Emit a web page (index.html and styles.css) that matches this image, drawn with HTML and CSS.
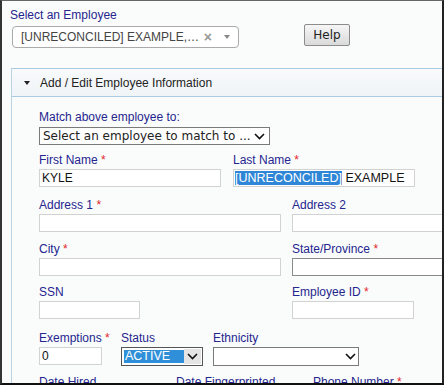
FILE: index.html
```html
<!DOCTYPE html>
<html>
<head>
    <meta name="viewport" content="width=device-width, initial-scale=1.0">
    <link rel="stylesheet" href="styles.css">
</head>
<body>
<div class="frame">

    <div class="topo">
        <div class="rotulo">Select an Employee</div>
        <div class="linha-topo">
            <div class="s2">
                <span class="s2-texto">[UNRECONCILED] EXAMPLE,…</span>
                <span class="s2-limpar">×</span>
                <span class="s2-seta"></span>
            </div>
            <button class="ajuda">Help</button>
        </div>
    </div>

    <div class="painel">
        <div class="painel-cab"><span class="tri"></span>Add / Edit Employee Information</div>
        <div class="painel-corpo">

            <div class="linha l-match">
                <div class="campo">
                    <div class="rotulo">Match above employee to:</div>
                    <div class="sel sel-match">
                        <span class="sel-texto">Select an employee to match to ...</span>
                        <svg class="chev" width="11" height="7" viewBox="0 0 11 7"><polyline points="1,1 5.5,5.5 10,1" fill="none" stroke="#111" stroke-width="1.6"/></svg>
                    </div>
                </div>
            </div>

            <div class="linha l-nome">
                <div class="campo c194">
                    <div class="rotulo">First Name <span class="req">*</span></div>
                    <div class="inp w182">KYLE</div>
                </div>
                <div class="campo">
                    <div class="rotulo">Last Name <span class="req">*</span></div>
                    <div class="inp w182 sobrenome"><span class="marcado">[UNRECONCILED]</span> EXAMPLE</div>
                </div>
            </div>

            <div class="linha l-end">
                <div class="campo c253">
                    <div class="rotulo">Address 1 <span class="req">*</span></div>
                    <div class="inp w242"></div>
                </div>
                <div class="campo">
                    <div class="rotulo">Address 2</div>
                    <div class="inp w200"></div>
                </div>
            </div>

            <div class="linha l-cidade">
                <div class="campo c253">
                    <div class="rotulo">City <span class="req">*</span></div>
                    <div class="inp w242"></div>
                </div>
                <div class="campo">
                    <div class="rotulo">State/Province <span class="req">*</span></div>
                    <div class="inp w200 escuro"></div>
                </div>
            </div>

            <div class="linha l-ssn">
                <div class="campo c253">
                    <div class="rotulo">SSN</div>
                    <div class="inp w101"></div>
                </div>
                <div class="campo">
                    <div class="rotulo">Employee ID <span class="req">*</span></div>
                    <div class="inp w122"></div>
                </div>
            </div>

            <div class="linha l-isen">
                <div class="campo c82">
                    <div class="rotulo">Exemptions <span class="req">*</span></div>
                    <div class="inp w63">0</div>
                </div>
                <div class="campo c92">
                    <div class="rotulo">Status</div>
                    <div class="sel sel-status">
                        <span class="status-marcado">ACTIVE</span>
                        <span class="status-seta">
                            <svg class="chev" width="11" height="7" viewBox="0 0 11 7"><polyline points="1,1 5.5,5.5 10,1" fill="none" stroke="#111" stroke-width="1.6"/></svg>
                        </span>
                    </div>
                </div>
                <div class="campo">
                    <div class="rotulo">Ethnicity</div>
                    <div class="sel sel-etnia">
                        <span class="sel-texto"></span>
                        <svg class="chev" width="11" height="7" viewBox="0 0 11 7"><polyline points="1,1 5.5,5.5 10,1" fill="none" stroke="#111" stroke-width="1.6"/></svg>
                    </div>
                </div>
            </div>

            <div class="linha l-datas">
                <div class="campo c137">
                    <div class="rotulo">Date Hired</div>
                </div>
                <div class="campo c137">
                    <div class="rotulo">Date Fingerprinted</div>
                </div>
                <div class="campo">
                    <div class="rotulo">Phone Number <span class="req">*</span></div>
                </div>
            </div>

        </div>
    </div>

</div>
</body>
</html>
```

FILE: styles.css
```css
        body {
            margin: 0;
            font-family: "Liberation Sans", Arial, sans-serif;
            font-size: 12px;
            background-color: #ffffff;
        }

        .frame {
            width: 444px;
            height: 385px;
            box-sizing: border-box;
            overflow: hidden;
            background-color: #fafcfb;
            border-top: 1px solid #666;
            border-left: 2px solid #333;
            border-right: 2px solid #222;
            border-bottom: 2px solid #111;
        }

        .rotulo {
            color: #25258f;
            line-height: 15px;
            white-space: nowrap;
        }

        .req {
            color: #e3262c;
        }

        /* topo: seletor de funcionario + ajuda */
        .topo {
            padding: 7px 0 0 8px;
        }

        .linha-topo {
            display: flex;
            align-items: flex-start;
            margin-top: 1px;
        }

        .s2 {
            display: flex;
            align-items: center;
            width: 227px;
            height: 22px;
            box-sizing: border-box;
            margin: 2px 0 0 2px;
            padding: 0 0 0 8px;
            border: 1px solid #aaa;
            border-radius: 4px;
            background-color: #fff;
        }

        .s2-texto {
            color: #444;
            flex: 1;
            white-space: nowrap;
        }

        .s2-limpar {
            color: #999;
            font-weight: bold;
            font-size: 14px;
            margin-right: 12px;
        }

        .s2-seta {
            width: 0;
            height: 0;
            border-left: 3px solid transparent;
            border-right: 3px solid transparent;
            border-top: 4px solid #888;
            margin-right: 8px;
        }

        .ajuda {
            margin-left: 65px;
            width: 46px;
            height: 22px;
            padding: 0;
            font-family: "DejaVu Sans", Verdana, sans-serif;
            font-size: 12px;
            color: #222;
            border: 1px solid #8c8c8c;
            border-radius: 2px;
            background: linear-gradient(#f6f6f6, #dadada);
        }

        /* painel */
        .painel {
            margin: 20px 0 0 9px;
            width: 470px;
            border-top: 1px solid #a9cbe4;
            border-left: 1px solid #b9d2e4;
        }

        .painel-cab {
            height: 27px;
            display: flex;
            align-items: center;
            color: #222;
            border-bottom: 1px solid #a9cbe4;
            background: linear-gradient(#f8fafb, #eff4f7);
        }

        .tri {
            width: 0;
            height: 0;
            border-left: 3px solid transparent;
            border-right: 3px solid transparent;
            border-top: 4px solid #222;
            margin: 0 10px 0 12px;
        }

        .painel-corpo {
            padding: 13px 0 20px 27px;
        }

        .linha {
            display: flex;
        }

        .campo {
            flex-shrink: 0;
        }

        .l-nome { margin-top: 8px; }
        .l-end { margin-top: 11px; }
        .l-cidade { margin-top: 10px; }
        .l-ssn { margin-top: 9px; }
        .l-isen { margin-top: 12px; }
        .l-datas { margin-top: 9px; }

        .c82 { width: 82px; }
        .c92 { width: 92px; }
        .c137 { width: 137px; }
        .c194 { width: 194px; }
        .c253 { width: 253px; }

        .inp {
            height: 18px;
            box-sizing: border-box;
            margin-top: 1px;
            padding: 0 2px;
            border: 1px solid #d2d2d2;
            background-color: #fff;
            color: #111;
            line-height: 16px;
            white-space: nowrap;
            overflow: hidden;
        }

        .w63 { width: 63px; }
        .w101 { width: 101px; }
        .w122 { width: 122px; }
        .w182 { width: 182px; }
        .w200 { width: 200px; }
        .w242 { width: 242px; }

        .escuro {
            border-color: #8a8a8a;
        }

        .sobrenome {
            padding-left: 1px;
            font-size: 12.5px;
        }

        .marcado {
            background-color: #2f86d6;
            color: #fff;
        }

        /* selects */
        .sel {
            display: flex;
            align-items: center;
            height: 18px;
            box-sizing: border-box;
            border: 1px solid #7a7a7a;
            background-color: #fff;
        }

        .sel-texto {
            flex: 1;
            white-space: nowrap;
            font-family: "DejaVu Sans", Verdana, sans-serif;
            color: #222;
        }

        .chev {
            display: block;
            flex-shrink: 0;
        }

        .sel-match {
            width: 231px;
            margin-top: 2px;
            padding: 0 4px 0 3px;
        }

        .sel-etnia {
            width: 146px;
            height: 19px;
            margin-top: 1px;
            padding: 0 2px 0 3px;
        }

        .sel-status {
            width: 82px;
            height: 19px;
            margin-top: 1px;
            padding: 1px;
            border-color: #555;
            align-items: stretch;
        }

        .status-marcado {
            flex: 1;
            margin: 1px 0 1px 1px;
            padding-left: 1px;
            background-color: #2f8fd8;
            color: #fff;
            font-size: 12.5px;
            line-height: 13px;
        }

        .status-seta {
            width: 17px;
            display: flex;
            align-items: center;
            justify-content: center;
            background-color: #e4e4e4;
        }
```
